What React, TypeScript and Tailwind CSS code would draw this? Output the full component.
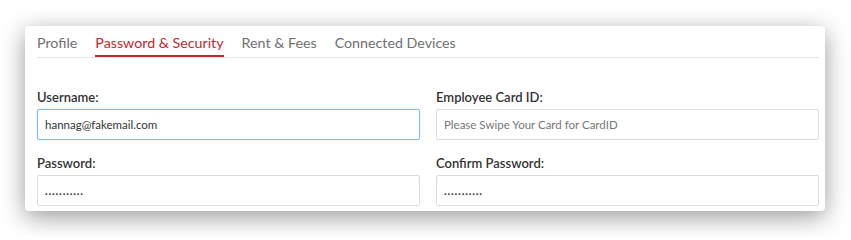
const tabs = ["Profile", "Password & Security", "Rent & Fees", "Connected Devices"];

type FieldProps = {
  label: string;
  value?: string;
  placeholder?: string;
  focused?: boolean;
  secret?: boolean;
};

const base =
  "h-[31px] w-full rounded-[2px] border border-solid bg-white px-[7px] text-[11.5px] text-[#333] outline-none placeholder:text-[#777]";
const idle = "border-[#dcdcdc]";
const active = "border-[#7fbcec] shadow-[0_0_2px_rgba(102,175,233,0.45)]";

const Field = ({ label, value, placeholder, focused, secret }: FieldProps) => (
  <div className="flex flex-col">
    <label className="mb-[4px] text-[13px] leading-[16px] font-semibold text-[#333]">{label}</label>
    <input
      readOnly
      value={value ?? ""}
      placeholder={placeholder}
      className={`${base} ${focused ? active : idle} ${secret ? "font-bold tracking-[0.8px] text-[#222]" : ""}`}
    />
  </div>
);

export default function App() {
  return (
    <div className="h-[237px] w-[851px] overflow-hidden bg-white pl-[25px] pt-[26px] font-['Lato',sans-serif]">
      <div className="h-[185px] w-[800px] overflow-hidden rounded-[4px] bg-white pl-[12px] pr-[6px] pt-[7px] shadow-[0_6px_24px_rgba(0,0,0,0.4)]">
        {/* Tabs */}
        <div className="flex gap-[18px] border-b border-[#e6e6e6]">
          {tabs.map((t, i) => (
            <div
              key={t}
              className={`border-b-2 pb-[2px] text-[14.25px] leading-[20px] ${
                i === 1 ? "border-[#c1272d] text-[#c1272d]" : "border-transparent text-[#707070]"
              }`}
            >
              {t}
            </div>
          ))}
        </div>

        {/* Form */}
        <div className="mt-[31px] grid grid-cols-2 gap-x-[16px] gap-y-[15px]">
          <Field label="Username:" value="hannag@fakemail.com" focused />
          <Field label="Employee Card ID:" placeholder="Please Swipe Your Card for CardID" />
          <Field label="Password:" value="..........." secret />
          <Field label="Confirm Password:" value="..........." secret />
        </div>
      </div>
    </div>
  );
}
